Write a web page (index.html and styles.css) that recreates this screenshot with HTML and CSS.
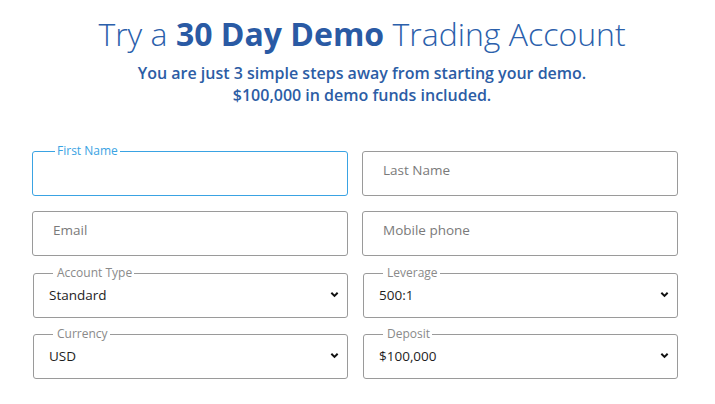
FILE: index.html
```html
<!DOCTYPE html>
<html lang="en">
<head>
<meta charset="utf-8">
<title>Try a 30 Day Demo Trading Account</title>
<link rel="stylesheet" href="styles.css">
</head>
<body>
<main class="page">
  <header class="intro">
    <h1 class="title">Try a <strong>30 Day Demo</strong> Trading Account</h1>
    <p class="subtitle">You are just 3 simple steps away from starting your demo.<br>$100,000 in demo funds included.</p>
  </header>
  <form class="form">
    <div class="row row-text">
      <fieldset class="field field-focus">
        <legend class="legend">First Name</legend>
        <input class="control" type="text" aria-label="First Name">
      </fieldset>
      <div class="field field-plain">
        <input class="control" type="text" placeholder="Last Name">
      </div>
    </div>
    <div class="row row-text">
      <div class="field field-plain">
        <input class="control" type="email" placeholder="Email">
      </div>
      <div class="field field-plain">
        <input class="control" type="tel" placeholder="Mobile phone">
      </div>
    </div>
    <div class="row row-select">
      <fieldset class="field field-select">
        <legend class="legend">Account Type</legend>
        <div class="select"><span>Standard</span><svg class="chev" viewBox="0 0 10 7" width="9" height="7"><path d="M1.5 1.5 L5 5 L8.5 1.5" fill="none" stroke="#111" stroke-width="2.2"/></svg></div>
      </fieldset>
      <fieldset class="field field-select">
        <legend class="legend">Leverage</legend>
        <div class="select"><span>500:1</span><svg class="chev" viewBox="0 0 10 7" width="9" height="7"><path d="M1.5 1.5 L5 5 L8.5 1.5" fill="none" stroke="#111" stroke-width="2.2"/></svg></div>
      </fieldset>
    </div>
    <div class="row row-select">
      <fieldset class="field field-select">
        <legend class="legend">Currency</legend>
        <div class="select"><span>USD</span><svg class="chev" viewBox="0 0 10 7" width="9" height="7"><path d="M1.5 1.5 L5 5 L8.5 1.5" fill="none" stroke="#111" stroke-width="2.2"/></svg></div>
      </fieldset>
      <fieldset class="field field-select">
        <legend class="legend">Deposit</legend>
        <div class="select"><span>$100,000</span><svg class="chev" viewBox="0 0 10 7" width="9" height="7"><path d="M1.5 1.5 L5 5 L8.5 1.5" fill="none" stroke="#111" stroke-width="2.2"/></svg></div>
      </fieldset>
    </div>
  </form>
</main>
</body>
</html>
```
FILE: styles.css
```css
* { box-sizing: border-box; }
html, body { margin: 0; padding: 0; background: #fff; }
body { font-family: "Open Sans", "Noto Sans", sans-serif; color: #222; }

.page { width: 715px; padding: 0 37px 0 32px; }

.intro { text-align: center; padding-left: 14px; padding-top: 12px; }
.title {
  margin: 0;
  font-size: 32px;
  font-weight: 300;
  line-height: 44px;
  color: #2b60ab;
}
.title strong { font-weight: 700; color: #2a5aa4; }
.subtitle {
  margin: 6px 0 0;
  font-size: 16px;
  font-weight: 600;
  line-height: 22px;
  color: #2c5da5;
}

.form { margin-top: 45px; }
.row { display: grid; grid-template-columns: 316px 316px; column-gap: 14px; align-items: start; }
.row-text { height: 45px; margin-bottom: 15px; }

.field {
  margin: 0;
  padding: 0;
  min-width: 0;
  border: 1px solid #9a9a9a;
  border-radius: 3px;
}
.field-plain { height: 45px; }
.field-focus {
  height: 51px;
  margin-top: -6px;
  border-color: #3aa3e3;
}
.field-focus .legend { color: #3aa3e3; margin-left: 22px; padding: 0 2px; }

.legend {
  font-size: 12px;
  line-height: 12px;
  color: #8a8a8a;
  padding: 0 2px 0 4px;
  margin-left: 19px;
}

.control {
  display: block;
  width: 100%;
  height: 100%;
  border: 0;
  outline: none;
  background: transparent;
  font-family: inherit;
  font-size: 13.5px;
  color: #222;
  padding: 0 20px 8px;
}
.field-focus .control { height: 38px; padding-bottom: 0; }
.control::placeholder { color: #7a7a7a; opacity: 1; }

.row-select { margin-top: -4px; }
.row-select + .row-select { margin-top: 10px; }
.field-select { height: 51px; margin-left: 1px; }
.select {
  display: flex;
  align-items: center;
  justify-content: space-between;
  height: 43px;
  margin-top: -6px;
  padding: 0 8px 0 15px;
  font-size: 13.5px;
  color: #1e1e1e;
}
.chev { display: block; }
```
